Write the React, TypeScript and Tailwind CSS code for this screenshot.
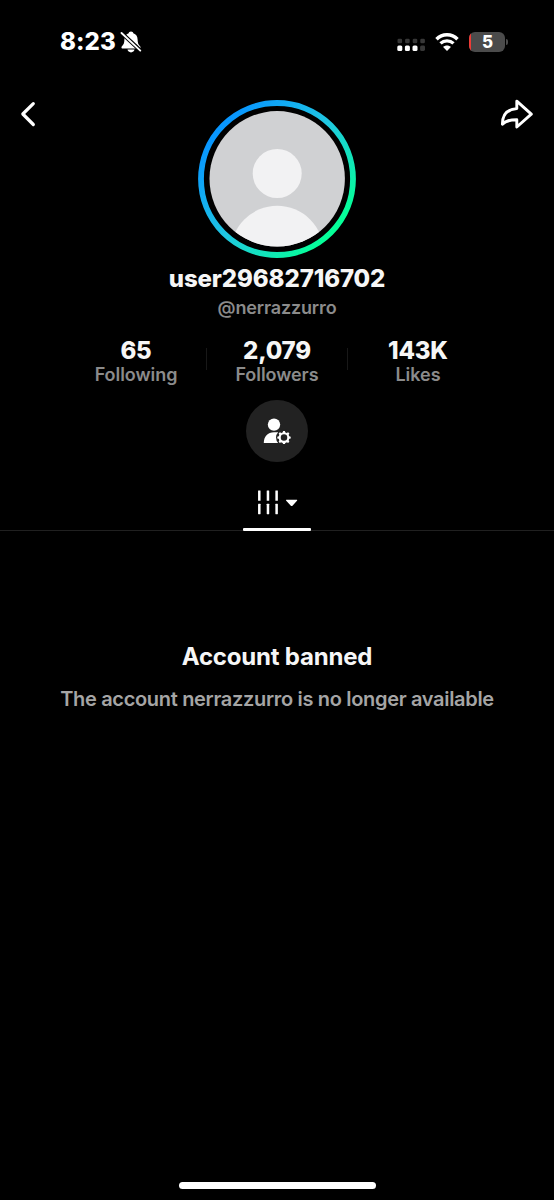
import React from 'react';

const stats = [
  { value: '65', label: 'Following' },
  { value: '2,079', label: 'Followers' },
  { value: '143K', label: 'Likes' },
];

const BellOffIcon = () => (
  <svg width="22" height="24" viewBox="0 0 22 24" fill="none">
    <path
      d="M11 1.5C9.6 1.5 8.8 2.3 8.7 3.3C5.8 4.2 4.5 6.5 4.4 9.4C4.3 13.2 3.6 14.4 1.9 16.2C1 17.2 1.4 18.6 2.8 18.6H19.2C20.6 18.6 21 17.2 20.1 16.2C18.4 14.4 17.7 13.2 17.6 9.4C17.5 6.5 16.2 4.2 13.3 3.3C13.2 2.3 12.4 1.5 11 1.5Z"
      fill="white"
    />
    <path d="M7.5 19.6H14.5C14.2 21.3 12.8 22.4 11 22.4C9.2 22.4 7.8 21.3 7.5 19.6Z" fill="white" />
    <path d="M1 2.5L21 21" stroke="black" strokeWidth="4" />
    <path d="M1.5 3L20.3 20.6" stroke="white" strokeWidth="1.9" strokeLinecap="round" />
  </svg>
);

const SignalDots = () => (
  <svg width="28" height="14" viewBox="0 0 28 14">
    {[0, 1, 2, 3].map((i) => (
      <React.Fragment key={i}>
        <rect x={0.5 + i * 7.6} y="0.7" width="4.6" height="4.6" rx="1.4" fill="#373737" />
        <rect x={0.3 + i * 7.6} y="7.5" width="5" height="5.4" rx="1.5" fill={i < 3 ? '#fff' : '#373737'} />
      </React.Fragment>
    ))}
  </svg>
);

const WifiIcon = () => (
  <svg width="24" height="18" viewBox="0 0 24 18" fill="none">
    <path d="M1.5 6.2C7.3 0.4 16.7 0.4 22.5 6.2" stroke="white" strokeWidth="3.5" />
    <path d="M5.5 10.4C9.1 6.9 14.9 6.9 18.5 10.4" stroke="white" strokeWidth="3.3" />
    <path d="M8.1 13.9C10.2 11.9 13.8 11.9 15.9 13.9L12 17.9Z" fill="white" />
  </svg>
);

const StatusBar = () => (
  <div className="flex h-[83px] items-center justify-between pl-[60px] pr-[46.5px]">
    <div className="flex items-center gap-[3px]">
      <span className="w-[57px] whitespace-nowrap text-[24px] font-extrabold leading-none tracking-[0.1px]">8:23</span>
      <BellOffIcon />
    </div>
    <div className="flex items-center">
      <div className="pt-[6px]">
        <SignalDots />
      </div>
      <div className="ml-[10px]">
        <WifiIcon />
      </div>
      <div className="ml-[10px] flex h-[20px] w-[36px] items-center overflow-hidden rounded-[6px] bg-[#4b4b4b]">
        <div className="h-full w-[2px] bg-[#ed3b36]" />
        <span className="flex-1 pr-px pt-px text-center text-[17px] font-extrabold leading-none">5</span>
      </div>
      <div className="ml-px h-[6px] w-[1.5px] rounded-r bg-[#4b4b4b]" />
    </div>
  </div>
);

const Avatar = () => (
  <svg width="158" height="158" viewBox="0 0 158 158" fill="none">
    <defs>
      <linearGradient id="ring" x1="22" y1="28" x2="136" y2="130" gradientUnits="userSpaceOnUse">
        <stop offset="0" stopColor="#0896ff" />
        <stop offset="0.5" stopColor="#20c8e2" />
        <stop offset="1" stopColor="#05ff98" />
      </linearGradient>
      <clipPath id="face">
        <circle cx="79.2" cy="78.8" r="67.7" />
      </clipPath>
    </defs>
    <circle cx="79" cy="79" r="76" stroke="url(#ring)" strokeWidth="5.8" />
    <g clipPath="url(#face)">
      <rect width="158" height="158" fill="#d0d1d3" />
      <circle cx="79.2" cy="73.5" r="24.5" fill="#f2f2f3" />
      <circle cx="79.2" cy="152.3" r="46.5" fill="#f2f2f3" />
    </g>
  </svg>
);

const ManageIcon = () => (
  <svg width="28" height="26" viewBox="0 0 28 26" fill="none">
    <circle cx="11" cy="6.6" r="6.2" fill="white" />
    <path d="M0.8 25C0.8 18.7 4.7 14.3 11 14.3H15V25H1.8C1.2 25 0.8 24.8 0.8 25Z" fill="white" />
    <circle cx="21" cy="19.6" r="8" fill="#222222" />
    <circle cx="21" cy="19.6" r="4.3" stroke="white" strokeWidth="2.1" />
    {[0, 45, 90, 135, 180, 225, 270, 315].map((angle) => (
      <path key={angle} d="M19.5 15.1L20.1 12.9H21.9L22.5 15.1Z" fill="white" transform={`rotate(${angle} 21 19.6)`} />
    ))}
  </svg>
);

const TabIcon = () => (
  <svg width="42" height="26" viewBox="0 0 42 26" fill="white">
    {[1.3, 10.3, 19.3].map((x) => (
      <React.Fragment key={x}>
        <rect x={x} y="0.4" width="2.6" height="10.8" rx="0.4" />
        <rect x={x} y="14.4" width="2.6" height="10.8" rx="0.4" />
      </React.Fragment>
    ))}
    <path d="M31 10.2H41.4C42 10.2 42.2 10.8 41.8 11.2L37.1 16.4C36.7 16.8 35.8 16.8 35.4 16.4L30.6 11.2C30.2 10.8 30.4 10.2 31 10.2Z" />
  </svg>
);

const App = () => {
  return (
    <div className="flex h-[1200px] w-[554px] flex-col bg-black font-['Inter',sans-serif] text-white">
      <StatusBar />

      {/* Profile header */}
      <header className="flex h-[175px] items-start justify-between px-[20px] pt-[16px]">
        <svg width="34" height="30" viewBox="0 0 34 30" fill="none">
          <path d="M13.3 4.7L2.8 15L13.3 25.5" stroke="white" strokeWidth="3.2" strokeLinecap="round" strokeLinejoin="round" />
        </svg>
        <div className="pt-[0.5px]">
          <Avatar />
        </div>
        <svg width="34" height="30" viewBox="0 0 34 30" fill="none">
          <path
            d="M16.8 2.2L31.3 15.2L16.8 28V20.8C9.6 20.8 6 21.5 2.4 25.3C2.4 16 7.2 10.2 16.8 9.6Z"
            stroke="white"
            strokeWidth="2.9"
            strokeLinejoin="round"
          />
        </svg>
      </header>

      <h1 className="mt-[6px] text-center text-[24px] font-extrabold leading-[30px] tracking-[-0.1px] text-[#f6f6f6]">
        user29682716702
      </h1>
      <p className="mt-[2px] text-center text-[18px] font-semibold leading-[24px] tracking-[-0.15px] text-[#8b8b8b]">
        @nerrazzurro
      </p>

      <div className="mt-[18px] flex h-[50px] justify-center">
        {stats.map((stat, index) => (
          <React.Fragment key={stat.label}>
            {index > 0 && <div className="mt-[10px] h-[22px] w-px bg-[#181818]" />}
            <div className="flex w-[140px] flex-col items-center">
              <span className="text-[24px] font-extrabold leading-[26px] tracking-[-0.2px] text-[#f6f6f6]">
                {stat.value}
              </span>
              <span className="text-[18px] font-semibold leading-[22px] tracking-[-0.05px] text-[#8b8b8b]">
                {stat.label}
              </span>
            </div>
          </React.Fragment>
        ))}
      </div>

      <div className="mt-[12px] flex size-[62px] items-center justify-center self-center rounded-full bg-[#222222]">
        <ManageIcon />
      </div>

      {/* Tabs */}
      <div className="flex h-[69px] flex-col items-center border-b border-[#202020] pt-[28px]">
        <TabIcon />
        <div className="mt-[12px] h-[3px] w-[68px] shrink-0 translate-y-px rounded-[1px] bg-white" />
      </div>

      <main className="flex flex-col items-center pt-[110px]">
        <h2 className="text-[24px] font-bold leading-[32px] tracking-[-0.2px] text-[#f6f6f6]">Account banned</h2>
        <p className="mt-[13px] whitespace-nowrap text-[20px] font-semibold leading-[26px] tracking-[-0.32px] text-[#a5a5a5]">
          The account nerrazzurro is no longer available
        </p>
      </main>

      <div className="mb-[11px] mt-auto h-[7px] w-[197px] self-center rounded-full bg-white" />
    </div>
  );
};

export default App;
